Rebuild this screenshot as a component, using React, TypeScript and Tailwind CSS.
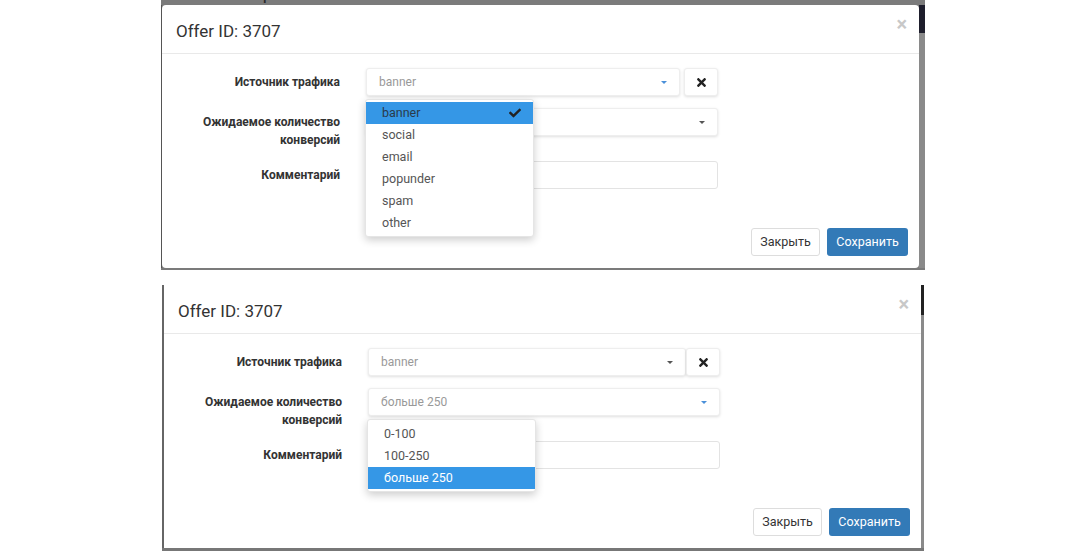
import React from "react";
import { FaCheck, FaTimes } from "react-icons/fa";

const font = { fontFamily: "Roboto, 'Noto Sans', Arial, sans-serif" };

function Caret({ blue }: { blue?: boolean }) {
  return (
    <span
      className={
        "block w-0 h-0 border-l-[3px] border-r-[3px] border-t-[3px] border-l-transparent border-r-transparent " +
        (blue ? "border-t-[#4a90d9]" : "border-t-[#555]")
      }
    />
  );
}

function SelectBox({
  value,
  blueCaret,
  className,
}: {
  value: string;
  blueCaret?: boolean;
  className?: string;
}) {
  return (
    <div
      className={
        "h-[28px] flex items-center justify-between pl-[12px] pr-[12px] bg-white border border-[#eeeeee] rounded-[3px] shadow-[0_1px_3px_rgba(0,0,0,0.13)] " +
        (className || "")
      }
    >
      <span className="text-[12px] text-[#999]">{value}</span>
      <Caret blue={blueCaret} />
    </div>
  );
}

function Label({ children }: { children: React.ReactNode }) {
  return (
    <div className="w-[178px] shrink-0 text-right pt-[5px] text-[12px] leading-[18px] font-bold text-[#333]">
      {children}
    </div>
  );
}

function Modal({ variant }: { variant: "source" | "conv" }) {
  const top = variant === "source";
  return (
    <div className="w-[757px] h-[263px] bg-white rounded-[4px] flex flex-col relative" style={font}>
      <div className="h-[49px] shrink-0 flex items-start justify-between pl-[14px] pr-[12px] border-b border-[#e9e9e9]">
        <span className="pt-[13px] text-[17px] leading-[26px] text-[#333]">Offer ID: 3707</span>
        <span className="pt-[7px] text-[20px] leading-[24px] font-bold text-[#c8c8c8]">×</span>
      </div>

      <div className="flex flex-col pt-[14px]">
        <div className="flex h-[28px]">
          <Label>Источник трафика</Label>
          <div className="ml-[26px] w-[352px] flex">
            <SelectBox value="banner" blueCaret={top} className={top ? "w-[314px]" : "w-[318px]"} />
            <div
              className={
                "h-[28px] flex items-center justify-center bg-white border border-[#eeeeee] rounded-[3px] shadow-[0_1px_3px_rgba(0,0,0,0.13)] " +
                (top ? "ml-[4px] w-[34px]" : "w-[34px]")
              }
            >
              <FaTimes className="text-[13px] text-[#222]" />
            </div>
          </div>
        </div>

        <div className="flex h-[41px] mt-[12px]">
          <Label>
            Ожидаемое количество
            <br />
            конверсий
          </Label>
          <div className="ml-[26px] w-[352px]">
            <SelectBox value={top ? "" : "больше 250"} blueCaret={!top} />
          </div>
        </div>

        <div className="flex h-[28px] mt-[12px]">
          <Label>Комментарий</Label>
          <div className="ml-[26px] w-[352px] h-[28px] border border-[#e3e3e3] rounded-[3px] bg-white" />
        </div>
      </div>

      <div className="mt-auto pb-[12px] pr-[11px] flex justify-end gap-[7px]">
        <button className="h-[28px] w-[69px] border border-[#dddddd] rounded-[3px] bg-white text-[12.5px] text-[#333]">
          Закрыть
        </button>
        <button className="h-[28px] w-[81px] rounded-[3px] bg-[#337ab7] text-[12.5px] text-white">
          Сохранить
        </button>
      </div>

      {top ? (
        <div className="absolute left-[203px] top-[94px] w-[169px] bg-white rounded-[3px] border border-[#e5e5e5] shadow-[0_3px_8px_rgba(0,0,0,0.2)] py-[2px]">
          {["banner", "social", "email", "popunder", "spam", "other"].map((t, i) => (
            <div
              key={t}
              className={
                "h-[22px] flex items-center justify-between pl-[16px] pr-[12px] text-[12.5px] " +
                (i === 0 ? "bg-[#3597e6] text-[#2a3a4a]" : "text-[#555]")
              }
            >
              <span>{t}</span>
              {i === 0 && <FaCheck className="text-[12px] text-[#222]" />}
            </div>
          ))}
        </div>
      ) : (
        <div className="absolute left-[203px] top-[134px] w-[169px] bg-white rounded-[3px] border border-[#e5e5e5] shadow-[0_3px_8px_rgba(0,0,0,0.2)] pt-[3px] pb-[2px]">
          {["0-100", "100-250", "больше 250"].map((t, i) => (
            <div
              key={t}
              className={
                "h-[22px] flex items-center pl-[16px] text-[12.5px] " +
                (i === 2 ? "bg-[#3597e6] text-white" : "text-[#555]")
              }
            >
              {t}
            </div>
          ))}
        </div>
      )}
    </div>
  );
}

export default function App() {
  return (
    <div className="w-[1080px] h-[551px] bg-white overflow-hidden flex flex-col" style={font}>
      <div className="ml-[161px] w-[764px] h-[270px] flex flex-col bg-[#7b7b7b]">
        <div className="h-[5px] overflow-hidden relative">
          <span className="absolute left-[88px] top-[-11px] text-[12px] leading-[14px] font-bold text-[#2a2a2a]">Deposit</span>
        </div>
        <div className="flex">
          <div className="w-[1px] bg-[#555]" />
          <Modal variant="source" />
          <div className="flex-1 bg-[linear-gradient(to_bottom,#1e1e2c_0,#1e1e2c_28px,#8a8a8a_28px)]" />
        </div>
      </div>

      <div className="mt-[14px] ml-[162px] w-[762px] flex flex-col">
        <div className="h-[1px]" />
        <div className="flex">
          <div className="w-[2px] bg-[#666]" />
          <Modal variant="conv" />
          <div className="flex-1 bg-[linear-gradient(to_bottom,#222_0,#222_30px,#8a8a8a_30px)]" />
        </div>
        <div className="h-[3px] bg-[#777]" />
      </div>
    </div>
  );
}
